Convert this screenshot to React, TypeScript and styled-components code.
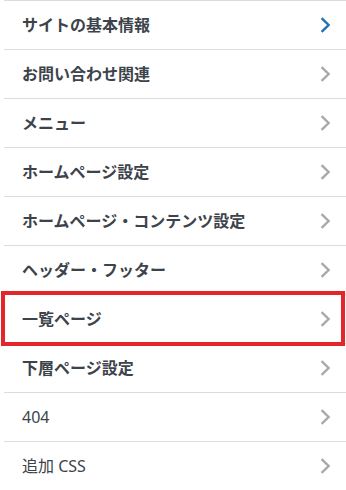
import React from 'react';
import styled, { createGlobalStyle } from 'styled-components';

const GlobalStyle = createGlobalStyle`
  html, body {
    margin: 0;
    padding: 0;
    background: #fff;
  }
  body {
    font-family: "Noto Sans", "Noto Sans CJK JP", sans-serif;
  }
`;

const Panel = styled.ul`
  list-style: none;
  margin: 0;
  padding: 0 0 0 4px;
  width: 342px;
  background: #fff;
`;

const Section = styled.li<{ $highlight?: boolean }>`
  position: relative;
  display: flex;
  align-items: center;
  justify-content: space-between;
  height: 48px;
  padding: 0 15px 0 18px;
  border-top: 1px solid #dcdcde;

  ${({ $highlight }) =>
    $highlight &&
    `
    &::after {
      content: '';
      position: absolute;
      z-index: 1;
      top: -4px;
      left: -3px;
      right: 1px;
      bottom: -3px;
      border: 4px solid #e3262a;
      pointer-events: none;
    }
  `}
`;

const Title = styled.span<{ $plain?: boolean }>`
  font-family: "Noto Sans", "Noto Sans CJK JP", sans-serif;
  font-size: 16px;
  font-weight: ${({ $plain }) => ($plain ? 400 : 700)};
  color: #3c434a;
  line-height: 1;
`;

const Chevron = styled.svg<{ $active?: boolean }>`
  width: 11px;
  height: 16px;
  flex: none;
  color: ${({ $active }) => ($active ? '#2271b1' : '#a7aaad')};
`;

const sections = [
  { title: 'サイトの基本情報', active: true },
  { title: 'お問い合わせ関連' },
  { title: 'メニュー' },
  { title: 'ホームページ設定' },
  { title: 'ホームページ・コンテンツ設定' },
  { title: 'ヘッダー・フッター' },
  { title: '一覧ページ', highlight: true },
  { title: '下層ページ設定' },
  { title: '404', plain: true },
  { title: '追加 CSS', plain: true },
];

export default function App() {
  return (
    <>
      <GlobalStyle />
      <Panel>
        {sections.map((s) => (
          <Section key={s.title} $highlight={s.highlight}>
            <Title $plain={s.plain}>{s.title}</Title>
            <Chevron $active={s.active} viewBox="0 0 11 16">
              <polyline
                points="1.6,1.2 8.6,8 1.6,14.8"
                fill="none"
                stroke="currentColor"
                strokeWidth="2.4"
              />
            </Chevron>
          </Section>
        ))}
      </Panel>
    </>
  );
}
